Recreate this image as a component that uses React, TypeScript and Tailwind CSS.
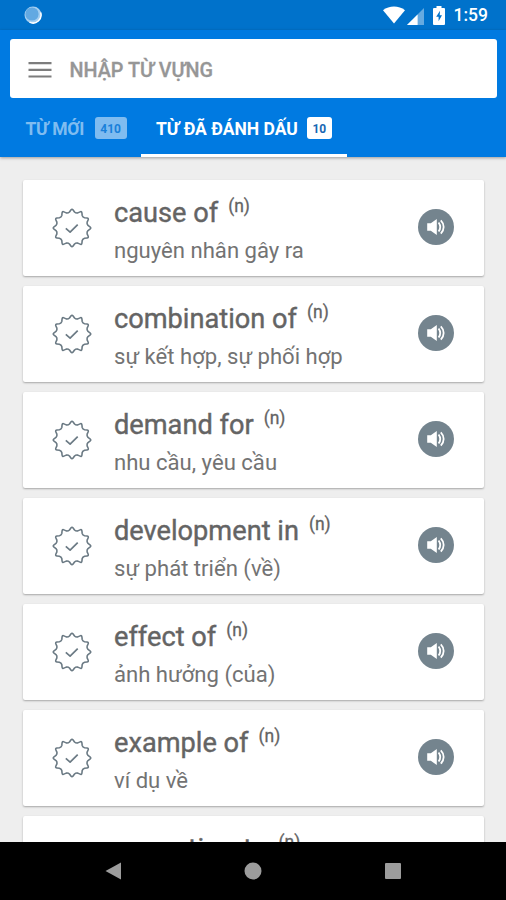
interface Word {
  text: string
  type: string
  meaning: string
  spaced?: boolean
}

const words: Word[] = [
  { text: 'cause of', type: 'n', meaning: 'nguyên nhân gây ra' },
  { text: 'combination of', type: 'n', meaning: 'sự kết hợp, sự phối hợp' },
  { text: 'demand for', type: 'n', meaning: 'nhu cầu, yêu cầu' },
  { text: 'development in', type: 'n', meaning: 'sự phát triển (về)' },
  { text: 'effect of', type: 'n', meaning: 'ảnh hưởng (của)' },
  { text: 'example of', type: 'n', meaning: 'ví dụ về' },
  { text: 'exception to', type: 'n', meaning: 'ngoại lệ', spaced: true },
]

// 12 rounded spikes around the centre of a 40x40 box
const at = (deg: number, r: number) => {
  const a = ((deg - 90) * Math.PI) / 180
  return `${(20 + r * Math.cos(a)).toFixed(2)} ${(20 + r * Math.sin(a)).toFixed(2)}`
}

const sealPath =
  Array.from({ length: 12 }, (_, i) => {
    const d = i * 30
    return `${i === 0 ? 'M' : 'L'}${at(d - 3.5, 18)}Q${at(d, 19.5)} ${at(d + 3.5, 18)}L${at(d + 9, 16.2)}Q${at(d + 15, 15.2)} ${at(d + 21, 16.2)}`
  }).join('') + 'Z'

function SealIcon() {
  return (
    <svg className="h-10 w-10 shrink-0" viewBox="0 0 40 40" fill="none" stroke="#6b7a84" strokeLinejoin="round">
      <path d={sealPath} strokeWidth="1.6" />
      <path d="M13.8 20.4l4.3 3.7 7.6-7.5" strokeWidth="1.7" />
    </svg>
  )
}

function SpeakerButton() {
  return (
    <button className="mb-[2px] flex h-9 w-9 shrink-0 items-center justify-center rounded-full bg-[#74848e]">
      <svg className="h-9 w-9" viewBox="0 0 36 36" fill="none" stroke="#fff">
        <path d="M9.2 14.2h3.6l6-4.2v16l-6-4.2H9.2z" fill="#fff" stroke="none" />
        <path d="M20.6 13.4c2 2.8 2 6.4 0 9.2" strokeWidth="1.8" />
        <path d="M22.8 11.4c3.8 3.8 3.8 9.4 0 13.2" strokeWidth="1.8" />
      </svg>
    </button>
  )
}

function StatusBar() {
  return (
    <div className="flex h-[30px] shrink-0 items-center justify-between bg-[#0072cb] pl-6 pr-[18px]">
      <svg className="h-[18px] w-[18px]" viewBox="0 0 18 18">
        <circle cx="9" cy="9" r="8.5" fill="#a5cff1" />
        <circle cx="8" cy="8" r="6.6" fill="#62a9e2" />
        <path d="M5.5 16.2A8 8 0 0 0 16.6 6.5" fill="none" stroke="#fff" strokeWidth="1.5" />
      </svg>
      <div className="flex items-center text-white">
        <svg className="h-[18px] w-[22px]" viewBox="0 0 22 18" fill="currentColor">
          <path d="M0 4.2C6.2-.7 15.8-.7 22 4.2L11 17.6z" />
        </svg>
        <svg className="ml-[2px] h-[17px] w-[18px] translate-y-px" viewBox="0 0 18 17" fill="currentColor">
          <path d="M17 0v17H0z" opacity=".4" />
          <path d="M10.6 6.4V17H0z" />
        </svg>
        <svg className="ml-[8px] h-[19px] w-[12px]" viewBox="0 0 12 19" fill="currentColor">
          <path d="M3.5 2V0h5v2H11q1 0 1 1v15q0 1-1 1H1q-1 0-1-1V3q0-1 1-1z" />
          <path d="M7 4.8L3.2 10.8h2.4v4.5L9 9.2H6.7z" fill="#0072cb" />
        </svg>
        <span className="ml-[9px] pt-[2px] text-[17.5px] leading-none font-medium">1:59</span>
      </div>
    </div>
  )
}

function WordCard({ word }: { word: Word }) {
  return (
    <div className="flex h-24 shrink-0 items-center rounded-[2px] bg-white pr-[30px] pl-[29px] shadow-[0_1px_2px_rgba(0,0,0,0.3)]">
      <SealIcon />
      <div className="ml-[22px] flex-1 pt-1 whitespace-nowrap">
        <div className="flex items-start text-[27.2px] leading-8 text-[#646464] [-webkit-text-stroke:0.4px_#646464]">
          <span className={word.spaced ? 'tracking-[0.5px]' : ''}>{word.text}</span>
          <span className="ml-[10px] text-[17.5px] leading-[19px] [-webkit-text-stroke:0.3px_#646464]">({word.type})</span>
        </div>
        <div className="mt-[7px] text-[22.1px] leading-7 text-[#737373]">{word.meaning}</div>
      </div>
      <SpeakerButton />
    </div>
  )
}

export default function App() {
  return (
    <div className="flex h-[900px] w-[506px] flex-col overflow-hidden bg-[#eeeeee] font-[Roboto,sans-serif]">
      <StatusBar />

      <header className="z-10 flex h-[127px] shrink-0 flex-col bg-[#007ae1] pt-[9px] shadow-[0_1px_3px_rgba(0,0,0,0.35)]">
        <div className="mr-[9px] ml-[10px] flex h-[59px] items-center rounded-[3px] bg-white pt-[2px] pl-[18px]">
          <svg className="h-4 w-6" viewBox="0 0 24 16" fill="#7d7d7d">
            <path d="M.5 0h23v2.2H.5zM.5 6.7h23v2.2H.5zM.5 13.4h23v2.2H.5z" />
          </svg>
          <span className="ml-[17.5px] pt-[2px] text-[19.8px] font-medium text-[#969696] [-webkit-text-stroke:0.3px_#969696]">
            NHẬP TỪ VỰNG
          </span>
        </div>
        <nav className="flex h-[59px] text-[17.5px] font-bold whitespace-nowrap text-white">
          <div className="flex w-[141px] items-center pt-px pl-[25.5px] text-[#7fbcf0]">
            <span className="pt-[2px] tracking-[-0.3px]">TỪ MỚI</span>
            <span className="ml-[10.5px] flex h-[22px] w-8 items-center justify-center rounded-[3px] bg-[#7fbcf0] pt-px text-xs text-[#1980da]">
              410
            </span>
          </div>
          <div className="flex w-[206px] items-center border-b-3 border-white pt-[4px] pl-[15px]">
            <span className="pt-[2px]">TỪ ĐÃ ĐÁNH DẤU</span>
            <span className="ml-[9px] flex h-[22px] w-[25px] items-center justify-center rounded-[3px] bg-white pt-px text-xs text-[#1768b3]">
              10
            </span>
          </div>
        </nav>
      </header>

      <main className="flex min-h-0 flex-1 flex-col gap-[10px] overflow-hidden pt-[23px] pr-[22px] pl-[23px]">
        {words.map((word) => (
          <WordCard key={word.text} word={word} />
        ))}
      </main>

      <footer className="z-10 flex h-[58px] shrink-0 justify-center bg-black pt-[20px]">
        <svg className="h-[18px] w-[296px]" viewBox="0 0 296 18" fill="#9c9c9c">
          <path d="M16 .5v17L.5 9z" />
          <circle cx="148" cy="9" r="8.5" />
          <rect x="280" y="1" width="16" height="16" rx="1" />
        </svg>
      </footer>
    </div>
  )
}
